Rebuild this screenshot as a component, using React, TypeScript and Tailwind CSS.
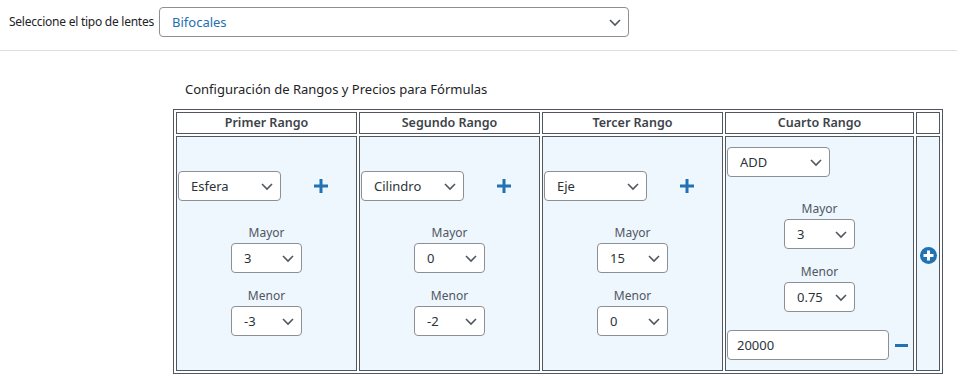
import React from "react";

const font = { fontFamily: '"Noto Sans", "Open Sans", sans-serif' };

function Chevron() {
  return (
    <svg
      className="pointer-events-none absolute right-[6px] top-1/2 -translate-y-1/2"
      width="16"
      height="16"
      viewBox="0 0 16 16"
    >
      <polyline points="3,6 8,11 13,6" fill="none" stroke="#50575e" strokeWidth="1.6" />
    </svg>
  );
}

function Sel({ value, w, blue }: { value: string; w: string; blue?: boolean }) {
  return (
    <div className={`relative inline-block h-[30px] ${w}`}>
      <select
        defaultValue={value}
        className={`h-[30px] w-full appearance-none rounded-[4px] border border-[#8c8f94] bg-white pl-[12px] pr-[24px] text-[13px] leading-[28px] outline-none ${
          blue ? "text-[#2271b1]" : "text-[#2c3338]"
        }`}
      >
        <option>{value}</option>
      </select>
      <Chevron />
    </div>
  );
}

function Plus() {
  return (
    <svg width="14" height="14" viewBox="0 0 14 14" className="ml-[33px]">
      <rect x="5.5" y="0" width="3" height="14" fill="#2271b1" />
      <rect x="0" y="5.5" width="14" height="3" fill="#2271b1" />
    </svg>
  );
}

function Label({ children, first }: { children: React.ReactNode; first?: boolean }) {
  return (
    <div className={`${first ? "" : "mt-[12px]"} h-[21px] text-[12px] leading-[21px] text-[#50575e]`}>
      {children}
    </div>
  );
}

function RangeCol({ type, mayor, menor }: { type: string; mayor: string; menor: string }) {
  return (
    <div className="flex flex-col">
      <div className="flex items-center">
        <Sel value={type} w="w-[103px]" />
        <Plus />
      </div>
      <div className="mt-[21px] flex flex-col items-center">
        <Label first>Mayor</Label>
        <Sel value={mayor} w="w-[71px]" />
        <Label>Menor</Label>
        <Sel value={menor} w="w-[71px]" />
      </div>
    </div>
  );
}

export default function App() {
  const th =
    "border border-[#50575e] p-0 text-center align-middle text-[12.5px] font-semibold leading-[20px] text-[#3c434a] h-[22px]";
  const td = "border border-[#50575e] bg-[#eef6fe] p-px align-middle";
  return (
    <div className="min-h-[385px] bg-white" style={font}>
      <div className="flex items-center border-b border-[#e0e0e0] pl-[9px] pt-[7px] pb-[13px]">
        <div className="w-[150px] whitespace-nowrap text-[12px] tracking-[-0.25px] text-[#1d2327]">
          Seleccione el tipo de lentes
        </div>
        <Sel value="Bifocales" w="w-[470px]" blue />
      </div>
      <div className="pl-[173px]">
        <div className="mt-[28px] pl-[12px] text-[13px] leading-[20px] text-[#1d2327]">
          Configuración de Rangos y Precios para Fórmulas
        </div>
        <table className="mt-[10px] border-separate border-spacing-[2px] border border-[#50575e]">
          <thead>
            <tr>
              <th className={`${th} w-[181px]`}>Primer Rango</th>
              <th className={`${th} w-[181px]`}>Segundo Rango</th>
              <th className={`${th} w-[181px]`}>Tercer Rango</th>
              <th className={`${th} w-[189px]`}>Cuarto Rango</th>
              <th className={`${th} w-[24px]`}></th>
            </tr>
          </thead>
          <tbody>
            <tr className="h-[235px]">
              <td className={td}>
                <RangeCol type="Esfera" mayor="3" menor="-3" />
              </td>
              <td className={td}>
                <RangeCol type="Cilindro" mayor="0" menor="-2" />
              </td>
              <td className={td}>
                <RangeCol type="Eje" mayor="15" menor="0" />
              </td>
              <td className={td}>
                <div className="flex flex-col">
                  <Sel value="ADD" w="w-[103px]" />
                  <div className="mt-[21px] flex flex-col items-center">
                    <Label first>Mayor</Label>
                    <Sel value="3" w="w-[71px]" />
                    <Label>Menor</Label>
                    <Sel value="0.75" w="w-[71px]" />
                  </div>
                  <div className="mt-[18px] flex items-center">
                    <input
                      defaultValue="20000"
                      className="h-[30px] w-[162px] rounded-[4px] border border-[#8c8f94] bg-white px-[9px] text-[13px] text-[#2c3338] outline-none"
                    />
                    <svg width="13" height="3" viewBox="0 0 13 3" className="ml-[6px]">
                      <rect x="0" y="0" width="13" height="3" fill="#2271b1" />
                    </svg>
                  </div>
                </div>
              </td>
              <td className={`${td} text-center`}>
                <svg width="17" height="17" viewBox="0 0 17 17" className="inline-block align-middle">
                  <circle cx="8.5" cy="8.5" r="8.5" fill="#2271b1" />
                  <rect x="7" y="3.5" width="3" height="10" fill="#fff" />
                  <rect x="3.5" y="7" width="10" height="3" fill="#fff" />
                </svg>
              </td>
            </tr>
          </tbody>
        </table>
      </div>
    </div>
  );
}
